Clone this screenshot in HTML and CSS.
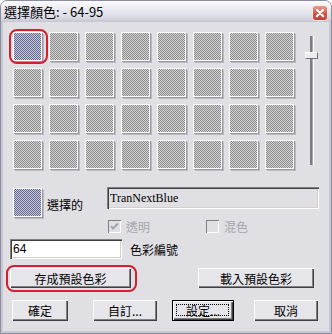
FILE: index.html
```html
<!DOCTYPE html>
<html>
<head>
  <title>選擇顏色</title>
  <link rel="stylesheet" href="styles.css">
</head>
<body>
  <div class="window">
    <div class="titlebar">
      <span class="title">選擇顏色: - 64-95</span>
      <svg class="close" xmlns="http://www.w3.org/2000/svg" viewBox="0 0 16 16" width="16" height="16">
        <defs>
          <linearGradient id="red" x1="0" y1="0" x2="0" y2="1">
            <stop offset="0" stop-color="#f0a090"/>
            <stop offset="0.5" stop-color="#d8584a"/>
            <stop offset="1" stop-color="#c03c34"/>
          </linearGradient>
        </defs>
        <rect x="0.5" y="0.5" width="15" height="15" rx="3" fill="url(#red)" stroke="#f4f0f0"/>
        <path d="M4.8 4.8l6.4 6.4M11.2 4.8l-6.4 6.4" stroke="#fff" stroke-width="2.2" stroke-linecap="round"/>
      </svg>
    </div>

    <div class="content">
      <div class="palette">
        <div class="swatches">
          <div class="swatch blue marked"></div>
          <div class="swatch"></div><div class="swatch"></div><div class="swatch"></div>
          <div class="swatch"></div><div class="swatch"></div><div class="swatch"></div><div class="swatch"></div>
          <div class="swatch"></div><div class="swatch"></div><div class="swatch"></div><div class="swatch"></div>
          <div class="swatch"></div><div class="swatch"></div><div class="swatch"></div><div class="swatch"></div>
          <div class="swatch"></div><div class="swatch"></div><div class="swatch"></div><div class="swatch"></div>
          <div class="swatch"></div><div class="swatch"></div><div class="swatch"></div><div class="swatch"></div>
          <div class="swatch"></div><div class="swatch"></div><div class="swatch"></div><div class="swatch"></div>
          <div class="swatch"></div><div class="swatch"></div><div class="swatch"></div><div class="swatch"></div>
        </div>
        <div class="slider">
          <div class="track">
            <div class="thumb"></div>
          </div>
        </div>
      </div>

      <div class="selected">
        <div class="current">
          <div class="swatch blue"></div>
          <span class="current-label">選擇的</span>
        </div>
        <div class="details">
          <input class="field name" type="text" value="TranNextBlue" disabled>
          <div class="checks">
            <label class="check">
              <span class="box">
                <svg xmlns="http://www.w3.org/2000/svg" viewBox="0 0 13 13" width="13" height="13">
                  <polyline points="3 6 5 8.5 10 3.5" fill="none" stroke="#a4a4ac" stroke-width="2"/>
                </svg>
              </span>
              透明
            </label>
            <label class="check">
              <span class="box"></span>
              混色
            </label>
          </div>
        </div>
      </div>

      <div class="number-row">
        <input class="field number" type="text" value="64">
        <span class="number-label">色彩編號</span>
      </div>

      <div class="preset-row">
        <button class="btn btn-save marked-btn">存成預設色彩</button>
        <button class="btn btn-load">載入預設色彩</button>
      </div>

      <div class="action-row">
        <button class="btn btn-ok">確定</button>
        <button class="btn btn-custom">自訂...</button>
        <button class="btn btn-setup focused">設定...</button>
        <button class="btn btn-cancel">取消</button>
      </div>
    </div>
  </div>
</body>
</html>
```

FILE: styles.css
```css
:root {
  --face: #e0dfe3;
  --shadow: #808080;
  --dark: #404040;
  --disabled-text: #a6a6ae;
  --mark: #d2202e;
}

body {
  margin: 0;
  font-family: "Noto Sans CJK TC", "Liberation Sans", sans-serif;
  font-size: 12px;
  color: #000;
}

.window {
  width: 332px;
  height: 334px;
  box-sizing: border-box;
  border: 1px solid #8c8ca2;
  border-radius: 7px 7px 0 0;
  background-color: var(--face);
  display: flex;
  flex-direction: column;
  overflow: hidden;
}

.titlebar {
  height: 21px;
  flex-shrink: 0;
  display: flex;
  align-items: center;
  justify-content: space-between;
  padding: 0 3px 0 3px;
  background: linear-gradient(#fdfdfe, #ececf2 35%, #dcdce6 75%, #c6c6d2);
}

.title {
  font-size: 13px;
  line-height: 21px;
}

.close {
  margin-top: 2px;
  display: block;
}

.content {
  flex: 1;
  border: solid #c8c8d4;
  border-width: 0 2px 2px;
  display: flex;
  flex-direction: column;
  padding-top: 10px;
}

/* palette */

.palette {
  display: flex;
  padding-left: 10px;
}

.swatches {
  display: grid;
  grid-template-columns: repeat(8, 29px);
  grid-auto-rows: 29px;
  gap: 7px;
}

.swatch {
  width: 29px;
  height: 29px;
  box-sizing: border-box;
  border: 1px solid #fbfbfb;
  box-shadow: 1px 1px 0 #9a9aa0, 2px 2px 0 #babac2;
  background-color: #b0b0b0;
  background-image: repeating-conic-gradient(#8a8a8a 0 25%, #d6d6d6 0 50%);
  background-size: 2px 2px;
  position: relative;
}

.swatch.blue {
  background-color: #9294b4;
  background-image: repeating-conic-gradient(#64688e 0 25%, #c8cadc 0 50%);
}

.marked:after {
  content: "";
  position: absolute;
  top: -4px;
  left: -5px;
  right: -7px;
  bottom: -4px;
  border: 2px solid var(--mark);
  border-radius: 8px;
}

.slider {
  margin-left: 11px;
  width: 14px;
  padding-top: 4px;
  display: flex;
  justify-content: center;
}

.track {
  position: relative;
  width: 1px;
  height: 129px;
  border-left: 2px solid #7c7c84;
  border-right: 1px solid #fff;
  background-color: #a8a8b0;
}

.thumb {
  position: absolute;
  top: 16px;
  left: -7px;
  width: 13px;
  height: 7px;
  box-sizing: border-box;
  background-color: #ececf0;
  border-top: 1px solid #fff;
  border-left: 1px solid #fff;
  border-right: 1px solid #707078;
  border-bottom: 1px solid #707078;
}

/* selected colour */

.selected {
  display: grid;
  grid-template-columns: 104px 212px;
  margin-top: 18px;
}

.current {
  display: flex;
  align-items: center;
  align-self: start;
  height: 31px;
  padding-left: 10px;
}

.current-label {
  margin-left: 5px;
  margin-top: 3px;
}

.field {
  box-sizing: border-box;
  border: none;
  margin: 0;
  padding: 0 3px;
  outline: none;
  color: #000;
  box-shadow: inset 1px 1px 0 var(--shadow), inset 2px 2px 0 var(--dark),
              inset -1px -1px 0 #fff, inset -2px -2px 0 #d4d0c8;
}

.name {
  width: 212px;
  height: 22px;
  display: block;
  background-color: var(--face);
  font-family: "Liberation Serif", serif;
  font-size: 12px;
  -webkit-text-fill-color: #000;
}

.checks {
  display: grid;
  grid-template-columns: 98px auto;
  margin-top: 11px;
  padding-left: 1px;
}

.check {
  display: flex;
  align-items: center;
  height: 13px;
  color: var(--disabled-text);
}

.box {
  width: 13px;
  height: 13px;
  margin-right: 5px;
  box-sizing: border-box;
  background-color: var(--face);
  box-shadow: inset 1px 1px 0 var(--shadow), inset -1px -1px 0 #fff;
}

.box svg {
  display: block;
}

/* colour number */

.number-row {
  display: flex;
  align-items: center;
  margin-top: 6px;
  padding-left: 7px;
}

.number {
  width: 112px;
  height: 20px;
  background-color: #fff;
  font-family: "Liberation Sans", sans-serif;
  font-size: 12px;
}

.number-label {
  margin-left: 8px;
}

/* buttons */

.preset-row {
  display: flex;
  justify-content: space-between;
  margin-top: 9px;
  padding: 0 15px 0 7px;
}

.action-row {
  display: flex;
  margin-top: 12px;
  padding-left: 9px;
}

.btn {
  position: relative;
  height: 20px;
  margin: 0;
  padding: 0;
  border: none;
  background-color: #e6e5ea;
  font-family: "Noto Sans CJK TC", sans-serif;
  font-size: 12px;
  color: #000;
  box-shadow: inset 1px 1px 0 #fff, inset -1px -1px 0 var(--dark),
              inset -2px -2px 0 var(--shadow);
}

.btn-save { width: 121px; }
.btn-load { width: 116px; }

.action-row .btn { height: 21px; }
.btn-ok { width: 56px; margin-right: 25px; }
.btn-custom { width: 64px; margin-right: 15px; }
.btn-setup { width: 62px; margin-right: 20px; }
.btn-cancel { width: 64px; }

.btn.focused {
  border: 1px solid #000;
  box-sizing: border-box;
}

.btn.focused:before {
  content: "";
  position: absolute;
  top: 3px;
  left: 3px;
  right: 4px;
  bottom: 4px;
  border: 1px dotted #000;
}

.marked-btn:after {
  content: "";
  position: absolute;
  top: -3px;
  left: -4px;
  right: -6px;
  bottom: -4px;
  border: 2px solid var(--mark);
  border-radius: 8px;
}
```
